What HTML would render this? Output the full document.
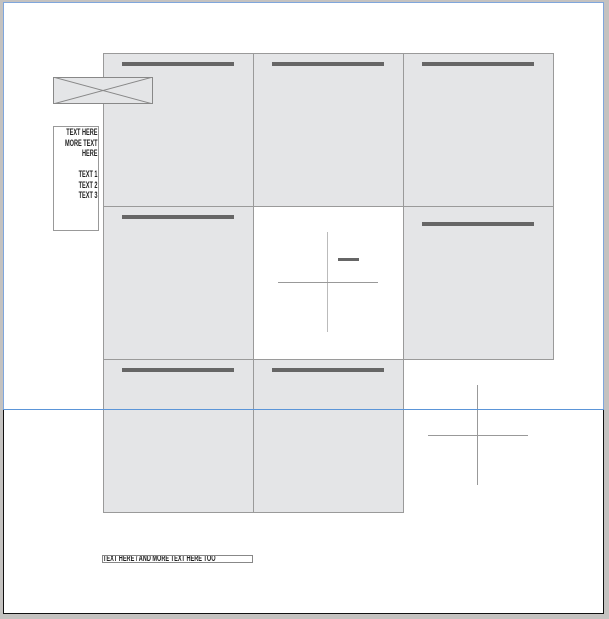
<!DOCTYPE html>
<html><head><style>
body{margin:0;width:609px;height:619px;background:#c4c2c0;position:relative;overflow:hidden;font-family:"Liberation Sans",sans-serif}
.a{position:absolute}
.cell{position:absolute;width:151px;height:154px;background:#e4e5e7;border:1px solid #9a9a9a;box-sizing:border-box}
.bar{position:absolute;left:18px;width:112px;height:4px;background:#666}
.t{font-size:9px;line-height:10.5px;color:#222;text-align:right;transform:scaleX(.62);transform-origin:right top;white-space:nowrap;font-weight:bold}
</style></head><body>
<div class="a" style="left:3px;top:2px;width:601px;height:612px;background:#fff"></div>
<div class="a" style="left:3px;top:2px;width:601px;height:1px;background:#7fa6dc"></div>
<div class="a" style="left:3px;top:2px;width:1px;height:407px;background:#7fa6dc"></div>
<div class="a" style="left:603px;top:2px;width:1px;height:407px;background:#7fa6dc"></div>
<div class="a" style="left:3px;top:409px;width:1px;height:205px;background:#111"></div>
<div class="a" style="left:603px;top:409px;width:1px;height:205px;background:#111"></div>
<div class="a" style="left:3px;top:613px;width:601px;height:1px;background:#111"></div>

<div class="cell" style="left:103px;top:53px"><div class="bar" style="top:8px"></div></div>
<div class="cell" style="left:253px;top:53px"><div class="bar" style="top:8px"></div></div>
<div class="cell" style="left:403px;top:53px"><div class="bar" style="top:8px"></div></div>
<div class="cell" style="left:103px;top:206px"><div class="bar" style="top:8px"></div></div>
<div class="cell" style="left:253px;top:206px;background:#fff"></div>
<div class="cell" style="left:403px;top:206px"><div class="bar" style="top:15px"></div></div>
<div class="cell" style="left:103px;top:359px"><div class="bar" style="top:8px"></div></div>
<div class="cell" style="left:253px;top:359px"><div class="bar" style="top:8px"></div></div>

<div class="a" style="left:327px;top:232px;width:1px;height:100px;background:#bbb"></div>
<div class="a" style="left:278px;top:282px;width:100px;height:1px;background:#999"></div>
<div class="a" style="left:338px;top:258px;width:21px;height:3px;background:#666"></div>
<div class="a" style="left:477px;top:385px;width:1px;height:100px;background:#999"></div>
<div class="a" style="left:428px;top:435px;width:100px;height:1px;background:#999"></div>

<div class="a" style="left:3px;top:409px;width:601px;height:1px;background:#5b95d8"></div>

<svg class="a" style="left:53px;top:77px" width="100" height="27"><rect x="0.5" y="0.5" width="99" height="26" fill="#e4e5e7" stroke="#888"/><path d="M0 0L100 27M0 27L100 0" stroke="#888" stroke-width="1"/></svg>
<div class="a" style="left:53px;top:126px;width:44px;height:103px;border:1px solid #999;background:#fff;overflow:hidden">
<div class="a t" style="right:0;top:0">TEXT HERE<br>MORE TEXT<br>HERE<br><br>TEXT 1<br>TEXT 2<br>TEXT 3</div></div>
<div class="a" style="left:102px;top:555px;width:149px;height:6px;border:1px solid #888;overflow:hidden">
<div class="a" style="left:0;top:-2px;font-size:9px;line-height:9px;color:#222;font-weight:bold;transform:scaleX(.62);transform-origin:left top;white-space:nowrap">TEXT HERE / AND MORE TEXT HERE TOO</div></div>
</body></html>
